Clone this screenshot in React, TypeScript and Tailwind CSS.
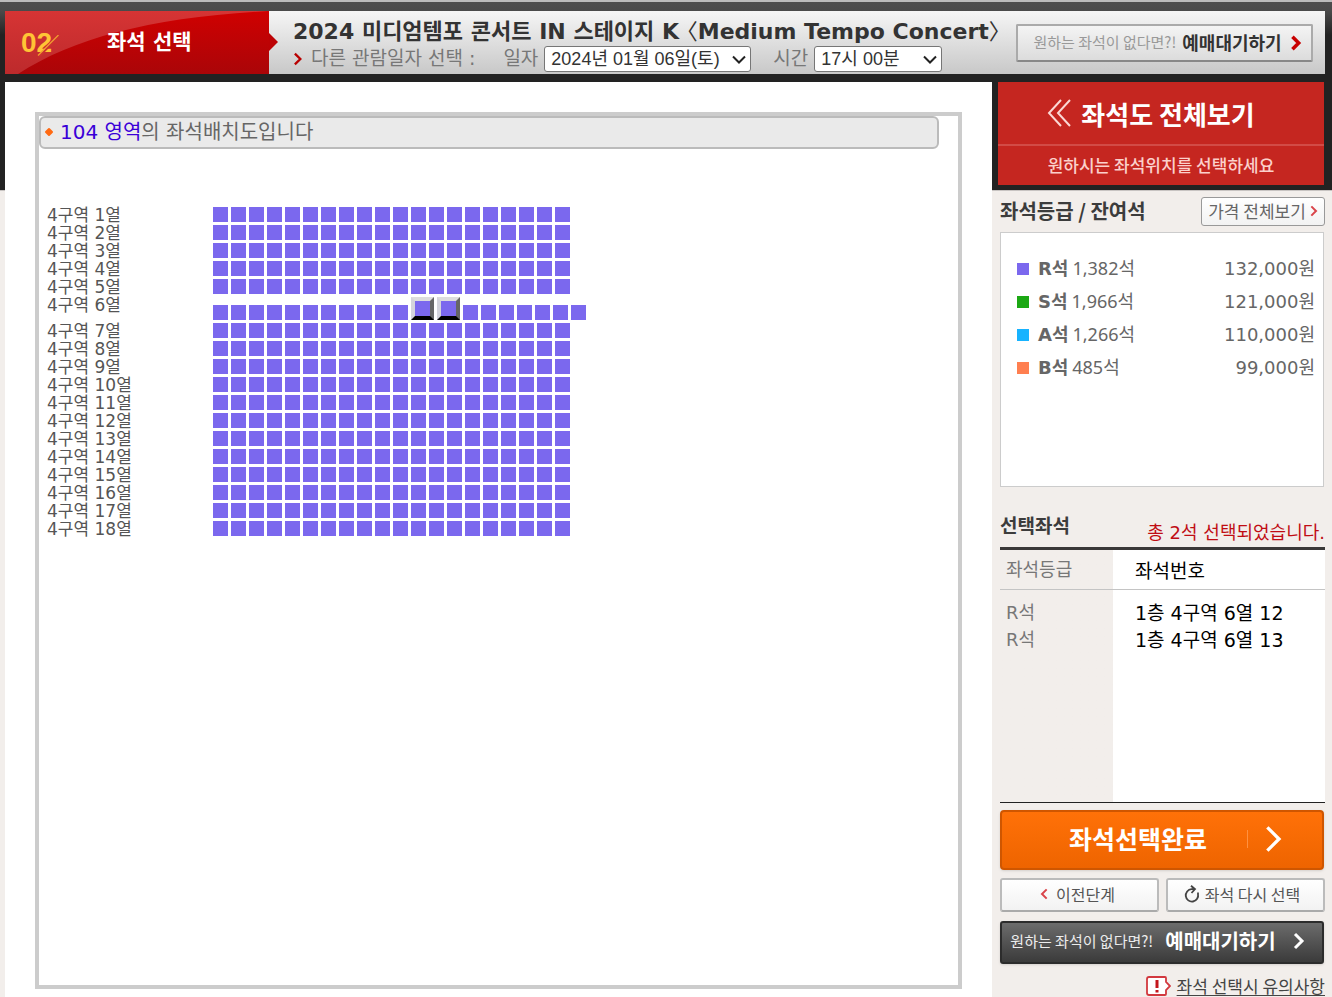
import { useState, type ReactNode } from "react";

const ROWS = Array.from({ length: 18 }, (_, i) => i + 1);
const SEATS = Array.from({ length: 20 }, (_, i) => i + 1);

const GRADES = [
  { name: "R석", left: "1,382석", price: "132,000원", color: "bg-[#7b68ee]" },
  { name: "S석", left: "1,966석", price: "121,000원", color: "bg-[#1ca814]" },
  { name: "A석", left: "1,266석", price: "110,000원", color: "bg-[#17b3ff]" },
  { name: "B석", left: "485석", price: "99,000원", color: "bg-[#ff7f50]" },
];

type Seat = { row: number; seat: number };

function Chevron({ className, left = false, width = 3 }: { className: string; left?: boolean; width?: number }) {
  return (
    <svg className={className} viewBox="0 0 12 18" fill="none" stroke="currentColor" strokeWidth={width} aria-hidden="true">
      <path d={left ? "M10 2 3 9l7 7" : "M2 2l7 7-7 7"} />
    </svg>
  );
}

function Picker({ id, className, children }: { id: string; className: string; children: ReactNode }) {
  return (
    <div className={`relative ${className}`}>
      <select
        id={id}
        className="h-[26px] w-full appearance-none rounded-[3px] border border-[#767676] bg-white pl-1.5 font-['Liberation_Sans','Noto_Sans_CJK_KR',sans-serif] text-lg leading-6 text-[#333]"
      >
        {children}
      </select>
      <svg className="pointer-events-none absolute top-[9px] right-[5px] h-2.5 w-3.5" viewBox="0 0 14 10" fill="none" stroke="#222" strokeWidth="2" aria-hidden="true">
        <path d="M1 1.500l6 6 6-6" />
      </svg>
    </div>
  );
}

function StepBanner() {
  return (
    <div className="relative h-[63px] w-[264px] shrink-0 bg-linear-to-b from-[#d00000] to-[#aa0508]">
      <svg className="absolute inset-0 h-[63px] w-[274px]" viewBox="0 0 274 63" aria-hidden="true">
        <defs>
          <linearGradient id="gloss" x1="0" y1="0" x2="0" y2="1">
            <stop offset="0" stopColor="#d63434" />
            <stop offset="1" stopColor="#bd2a2c" />
          </linearGradient>
        </defs>
        <path d="M0 0H264C150 6 70 26 13 63H0Z" fill="url(#gloss)" />
        <path d="M264 22l9 9-9 9Z" fill="#bc0205" />
      </svg>
      <div className="relative flex h-full items-center pl-4">
        <span className="w-[86px] font-['Liberation_Sans'] text-[28px] leading-none font-bold text-[#ffc435]">02</span>
        <span className="text-[21px] leading-none font-bold text-white">좌석 선택</span>
      </div>
      <svg className="absolute top-6 left-8 size-[22px]" viewBox="0 0 22 22" fill="none" aria-hidden="true">
        <path d="M2 21.500 22 1.500" stroke="#cc3030" strokeWidth="2" />
        <path d="M1 20.500 21.500 0" stroke="#f0a030" strokeWidth="1.200" />
      </svg>
    </div>
  );
}

function Header() {
  return (
    <header className="flex pt-[11px] pr-[7px] pl-[5px]">
      <StepBanner />
      <div className="flex h-[63px] min-w-0 flex-1 items-center justify-between bg-linear-to-b from-[#f6f6f6] to-[#c8c8c8] pr-3 pl-6">
        <div className="shrink-0 pt-1 whitespace-nowrap">
          <h1 className="text-[22px] leading-7 font-bold text-[#333]">
            2024 미디엄템포 콘서트 IN 스테이지 K <span className="font-normal [font-feature-settings:'halt']">〈</span>Medium Tempo Concert<span className="font-normal [font-feature-settings:'halt']">〉</span>
          </h1>
          <div className="flex h-[26px] items-center text-[19px] leading-none text-[#777]">
            <Chevron className="mr-2 h-3.5 w-2.5 text-[#b90000]" width={3} />
            <span>다른 관람일자 선택 :</span>
            <label htmlFor="date" className="mr-1.5 ml-7">일자</label>
            <Picker id="date" className="w-[207px]">
              <option>2024년 01월 06일(토)</option>
            </Picker>
            <label htmlFor="time" className="mr-1.5 ml-[22px]">시간</label>
            <Picker id="time" className="w-32">
              <option>17시 00분</option>
            </Picker>
          </div>
        </div>
        <button className="flex h-[38px] w-[297px] shrink-0 items-center justify-center gap-1.5 rounded-xs border-2 border-[#aaa] border-b-[#888] bg-linear-to-b from-[#f4f4f4] to-[#dcdcdc] pl-1.5 font-['Noto_Sans_CJK_KR',sans-serif] whitespace-nowrap">
          <span className="text-[15px] text-[#999]">원하는 좌석이 없다면?!</span>
          <span className="text-[18px] font-bold text-[#333]">예매대기하기</span>
          <Chevron className="ml-0.5 h-4 w-3 text-[#c80000]" width={4} />
        </button>
      </div>
    </header>
  );
}

function SeatMap({ selected, onToggle }: { selected: Seat[]; onToggle: (s: Seat) => void }) {
  return (
    <main className="flex min-w-0 flex-1 flex-col bg-white px-[30px] pt-[30px] pb-2">
      <section className="flex-1 border-4 border-[#ccc]">
        <h2 className="mr-[19px] flex h-[33px] items-center gap-1.5 rounded-md border-2 border-[#bbb] bg-[#eaeaea] pb-0.5 pl-[3px] text-xl leading-none text-[#666]">
          <svg className="size-2.5" viewBox="0 0 10 10" aria-hidden="true">
            <path d="M5 2 8 5 5 8 2 5Z" fill="#ff6a13" stroke="#ff6a13" strokeWidth="2" strokeLinejoin="round" />
          </svg>
          <span><span className="text-[#3a00d8]">104 영역</span>의 좌석배치도입니다</span>
        </h2>
        <div className="flex flex-col gap-[3px] pt-[58px] pl-2">
          {ROWS.map((row) => (
            <div key={row} className="flex items-start">
              <span className="h-[15px] w-[166px] shrink-0 text-[17px] leading-[17px] text-[#555]">4구역 {row}열</span>
              <div className="flex items-end gap-[3px]">
                {SEATS.map((seat) => {
                  const on = selected.some((s) => s.row === row && s.seat === seat);
                  return (
                    <button
                      key={seat}
                      aria-label={`4구역 ${row}열 ${seat}`}
                      aria-pressed={on}
                      onClick={() => onToggle({ row, seat })}
                      className={
                        on
                          ? "size-[23px] border-4 border-t-[#ddd] border-r-[#666] border-b-black border-l-[#d4d4dc] bg-[#7b68ee]"
                          : "size-[15px] bg-[#7b68ee]"
                      }
                    />
                  );
                })}
              </div>
            </div>
          ))}
        </div>
      </section>
    </main>
  );
}

function Sidebar({ selected, onReset }: { selected: Seat[]; onReset: () => void }) {
  return (
    <aside className="w-[340px] shrink-0 font-['Noto_Sans_CJK_KR',sans-serif]">
      <div className="h-[108px] bg-[#222] pr-2 pl-1.5">
        <button className="flex h-[103px] w-full flex-col bg-[#c52620] text-white">
          <span className="flex h-16 w-full items-center justify-center gap-2.5 border-b-2 border-[#d24b46] pr-5 text-[26px] font-bold">
            <svg className="h-7 w-6" viewBox="0 0 24 28" fill="none" stroke="#fbd8d4" strokeWidth="2" aria-hidden="true">
              <path d="M14 1 2 14l12 13M23 1 11 14l12 13" />
            </svg>
            좌석도 전체보기
          </span>
          <span className="flex w-full flex-1 items-center justify-center pb-0.5 text-[17px] font-medium text-[#fbd0cb]">원하시는 좌석위치를 선택하세요</span>
        </button>
      </div>

      <div className="pr-[7px] pl-2">
        <div className="flex h-[42px] items-center justify-between">
          <h2 className="text-xl font-bold text-[#3c3c3c]">좌석등급 / 잔여석</h2>
          <button className="flex h-[29px] w-[124px] items-center justify-center gap-1 rounded-[3px] border border-[#999] bg-linear-to-b from-white to-[#f2f2f2] text-[17px] text-[#666]">
            가격 전체보기
            <Chevron className="h-3 w-2 text-[#d9444a]" width={3} />
          </button>
        </div>
        <ul className="mr-px h-[255px] border border-[#ccc] bg-white pt-[19px] pr-2 pl-4 font-['DejaVu_Sans','Noto_Sans_CJK_KR',sans-serif] text-lg leading-[33px] text-[#666]">
          {GRADES.map((g) => (
            <li key={g.name} className="flex h-[33px] items-center">
              <span className={`mr-[9px] size-3 ${g.color}`} />
              <b className="mr-1">{g.name}</b>
              <span className="font-['Noto_Sans','Noto_Sans_CJK_KR',sans-serif]">{g.left}</span>
              <span className="ml-auto">{g.price}</span>
            </li>
          ))}
        </ul>

        <div className="flex h-[60px] items-end justify-between pb-1">
          <h2 className="pb-1 text-[19px] font-bold text-[#3c3c3c]">선택좌석</h2>
          <p className="font-['DejaVu_Sans','Noto_Sans_CJK_KR',sans-serif] text-lg leading-5 text-[#c00d14]">총 {selected.length}석 선택되었습니다.</p>
        </div>
        <div className="h-64 border-t-3 border-b border-t-[#3a3838] border-b-[#222] bg-linear-to-r from-[#f2eeeb] from-[113px] to-white to-[113px]">
          <table className="w-full border-collapse text-left font-['DejaVu_Sans','Noto_Sans_CJK_KR',sans-serif]">
            <thead>
              <tr className="h-[39px] border-b border-[#c4c4c4]">
                <th className="w-[135px] pt-0.5 pl-1.5 text-lg leading-none font-normal text-[#777]">좌석등급</th>
                <th className="pt-1 text-[19px] leading-none font-normal text-black">좌석번호</th>
              </tr>
            </thead>
            <tbody className="before:block before:h-2.5">
              {selected.map((s) => (
                <tr key={`${s.row}-${s.seat}`} className="h-[27px]">
                  <td className="pl-1.5 text-lg leading-none text-[#777]">R석</td>
                  <td className="text-[19px] leading-none text-black">1층 4구역 {s.row}열 {s.seat}</td>
                </tr>
              ))}
            </tbody>
          </table>
        </div>

        <button className="mt-[7px] flex h-[60px] w-[324px] items-center justify-end rounded-sm border-2 border-[#cf5600] bg-linear-to-b from-[#ff7108] to-[#ee6400] pr-[38px] pb-0.5 text-white shadow-sm">
          <span className="mr-10 text-[25px] font-bold">좌석선택완료</span>
          <span className="mr-4 h-[18px] w-px bg-[#ff9140]" />
          <Chevron className="h-[30px] w-5" width={2} />
        </button>
        <div className="mt-2 grid grid-cols-2 gap-[7px] text-base text-[#555]">
          <button className="flex h-[34px] items-center justify-center gap-2 rounded-[3px] border-2 border-[#bbb] border-b-[#aaa] bg-linear-to-b from-white to-[#f2f2f2] pr-1 pb-0.5">
            <Chevron className="h-3 w-2 text-[#d9444a]" left width={3} />
            이전단계
          </button>
          <button onClick={onReset} className="flex h-[34px] items-center justify-center gap-1 rounded-[3px] border-2 border-[#bbb] border-b-[#aaa] bg-linear-to-b from-white to-[#f2f2f2] pr-2 pb-0.5">
            <svg className="size-[18px]" viewBox="0 0 18 18" fill="none" stroke="#444" strokeWidth="1.800" aria-hidden="true">
              <path d="M11 4.200H8.500A6.200 6.200 0 1 0 15 9V7.500M8 .8l4 3.400L8.500 8" />
            </svg>
            좌석 다시 선택
          </button>
        </div>
        <button className="mt-[9px] flex h-[43px] w-[324px] items-center justify-center gap-3 rounded-[3px] border-2 border-[#2c2c2c] bg-linear-to-b from-[#6c6c6c] to-[#3b3b3b] pr-2 pb-[3px] whitespace-nowrap text-white shadow-sm">
          <span className="text-[15px] text-[#ececec]">원하는 좌석이 없다면?!</span>
          <span className="text-xl font-bold">예매대기하기</span>
          <Chevron className="ml-1 h-[18px] w-3.5" width={3} />
        </button>
        <a href="#notice" className="mt-2.5 flex h-[23px] items-center justify-end gap-1.5 text-[17px] leading-[22px] text-[#444] underline underline-offset-2">
          <svg className="h-5 w-[25px]" viewBox="0 0 25 20" fill="none" aria-hidden="true">
            <path d="M3 1H19Q20 1 20 2V6l4 4-4 4v4Q20 19 19 19H3Q1 19 1 17V3Q1 1 3 1Z" fill="white" stroke="#d2383e" strokeWidth="1.800" />
            <path d="M11 4v8M11 14v2.500" stroke="#c4161c" strokeWidth="3" />
          </svg>
          좌석 선택시 유의사항
        </a>
      </div>
    </aside>
  );
}

export default function App() {
  const [selected, setSelected] = useState<Seat[]>([
    { row: 6, seat: 12 },
    { row: 6, seat: 13 },
  ]);

  const toggle = (seat: Seat) =>
    setSelected((prev) => {
      const rest = prev.filter((s) => s.row !== seat.row || s.seat !== seat.seat);
      return rest.length < prev.length ? rest : [...prev, seat];
    });

  return (
    <div className="flex min-h-screen flex-col bg-[linear-gradient(to_bottom,#bbb_2px,#4d4d4d_2px,#4a4a4a_11px,#222_35px,#222_190px,#c8c4c2_190px,#c8c4c2_191px,#f2eeeb_191px)] font-['DejaVu_Sans','Noto_Sans_CJK_KR',sans-serif]">
      <Header />
      <div className="flex flex-1 pt-2 pl-[5px]">
        <SeatMap selected={selected} onToggle={toggle} />
        <Sidebar selected={selected} onReset={() => setSelected([])} />
      </div>
    </div>
  );
}
